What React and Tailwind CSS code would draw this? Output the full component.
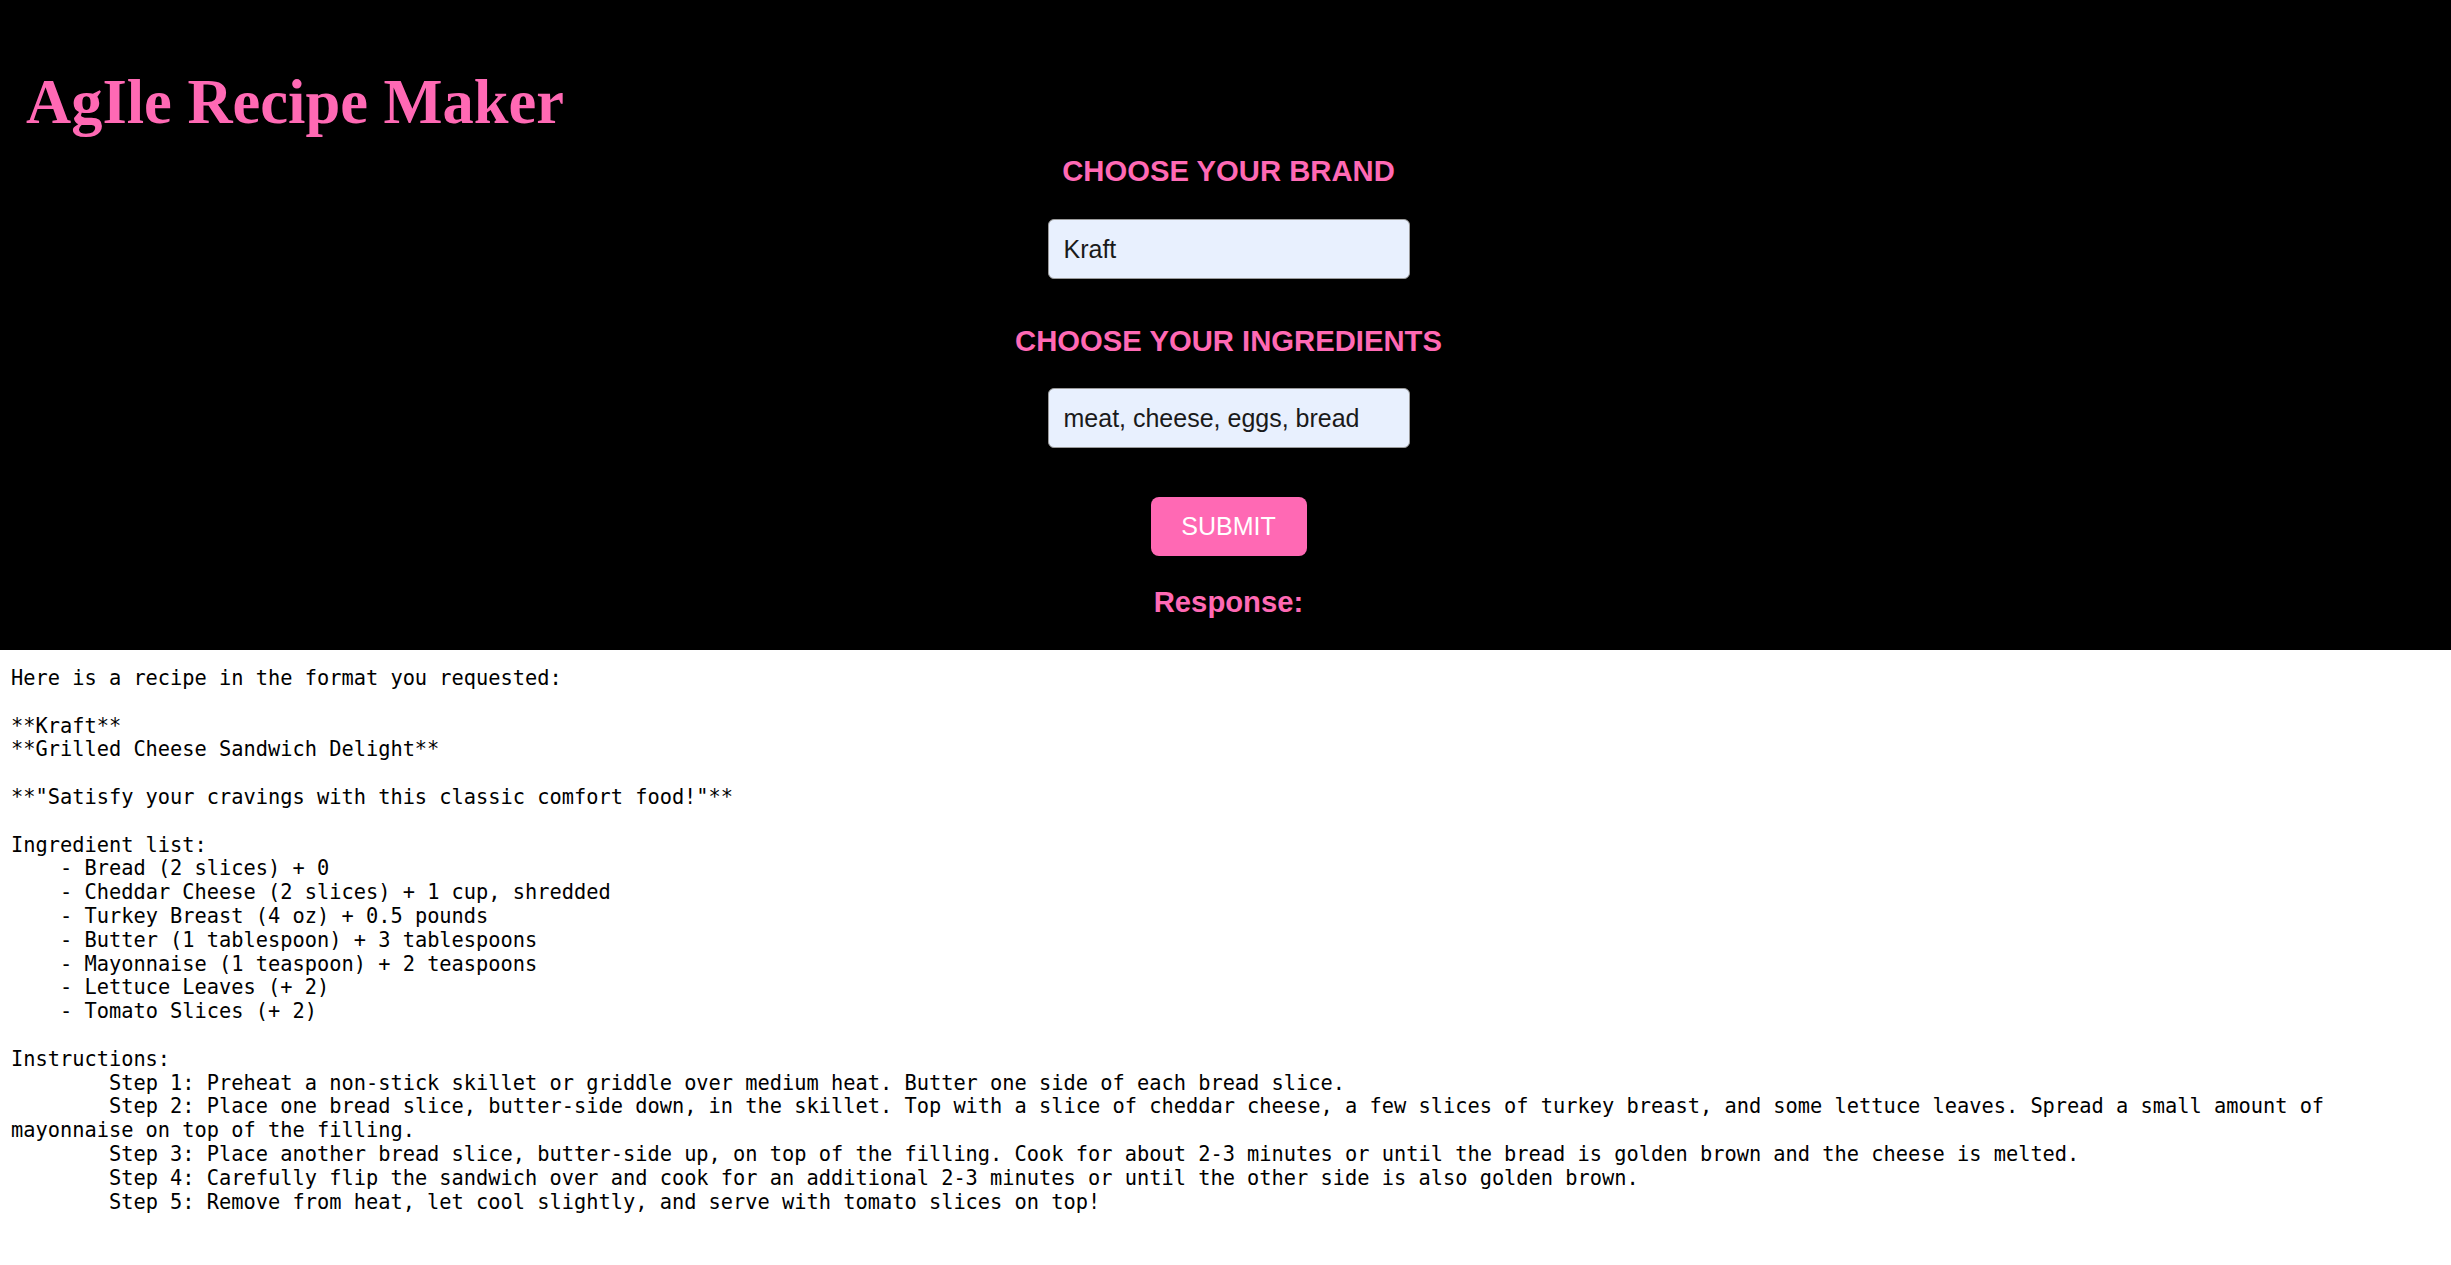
const RECIPE = `Here is a recipe in the format you requested:

**Kraft**
**Grilled Cheese Sandwich Delight**

**"Satisfy your cravings with this classic comfort food!"**

Ingredient list:
    - Bread (2 slices) + 0
    - Cheddar Cheese (2 slices) + 1 cup, shredded
    - Turkey Breast (4 oz) + 0.5 pounds
    - Butter (1 tablespoon) + 3 tablespoons
    - Mayonnaise (1 teaspoon) + 2 teaspoons
    - Lettuce Leaves (+ 2)
    - Tomato Slices (+ 2)

Instructions:
\tStep 1: Preheat a non-stick skillet or griddle over medium heat. Butter one side of each bread slice.
\tStep 2: Place one bread slice, butter-side down, in the skillet. Top with a slice of cheddar cheese, a few slices of turkey breast, and some lettuce leaves. Spread a small amount of mayonnaise on top of the filling.
\tStep 3: Place another bread slice, butter-side up, on top of the filling. Cook for about 2-3 minutes or until the bread is golden brown and the cheese is melted.
\tStep 4: Carefully flip the sandwich over and cook for an additional 2-3 minutes or until the other side is also golden brown.
\tStep 5: Remove from heat, let cool slightly, and serve with tomato slices on top!`;

function Heading({ children, className = '' }) {
  return (
    <h3
      className={`text-[29.25px] font-bold leading-[normal] text-[#ff69b4] ${className}`}
      style={{ fontFamily: '"Liberation Sans", Arial, sans-serif' }}
    >
      {children}
    </h3>
  );
}

function Field({ value, className = '' }) {
  return (
    <input
      readOnly
      value={value}
      className={`h-[60px] w-[362px] rounded-[6px] border border-[#9a9a9a] bg-[#e8f0fe] pl-[15px] text-[25px] text-[#1a1a1a] outline-none ${className}`}
      style={{ fontFamily: '"Liberation Sans", Arial, sans-serif' }}
    />
  );
}

export default function App() {
  return (
    <div className="min-h-screen bg-white">
      <div className="bg-black pb-[31px] pt-[66px]">
        <h1
          className="pl-[26px] text-[62.5px] font-bold leading-[normal] text-[#ff69b4]"
          style={{ fontFamily: '"Liberation Serif", "Times New Roman", serif' }}
        >
          AgIle Recipe Maker
        </h1>

        <div className="mt-[16px] flex flex-col items-center pl-[6px]">
          <Heading>CHOOSE YOUR BRAND</Heading>
          <Field value="Kraft" className="mt-[31px]" />

          <Heading className="mt-[46px]">CHOOSE YOUR INGREDIENTS</Heading>
          <Field value="meat, cheese, eggs, bread" className="mt-[30px]" />

          <button
            className="mt-[49px] h-[59px] w-[156px] rounded-[8px] bg-[#ff69b4] text-[25px] text-white"
            style={{ fontFamily: '"Liberation Sans", Arial, sans-serif' }}
          >
            SUBMIT
          </button>

          <Heading className="mt-[30px]">Response:</Heading>
        </div>
      </div>

      <pre
        className="mt-[17px] whitespace-pre-wrap pl-[11px] text-[20.34px] leading-[23.8px] text-black [tab-size:8]"
        style={{ fontFamily: '"DejaVu Sans Mono", monospace' }}
      >
        {RECIPE}
      </pre>
    </div>
  );
}
